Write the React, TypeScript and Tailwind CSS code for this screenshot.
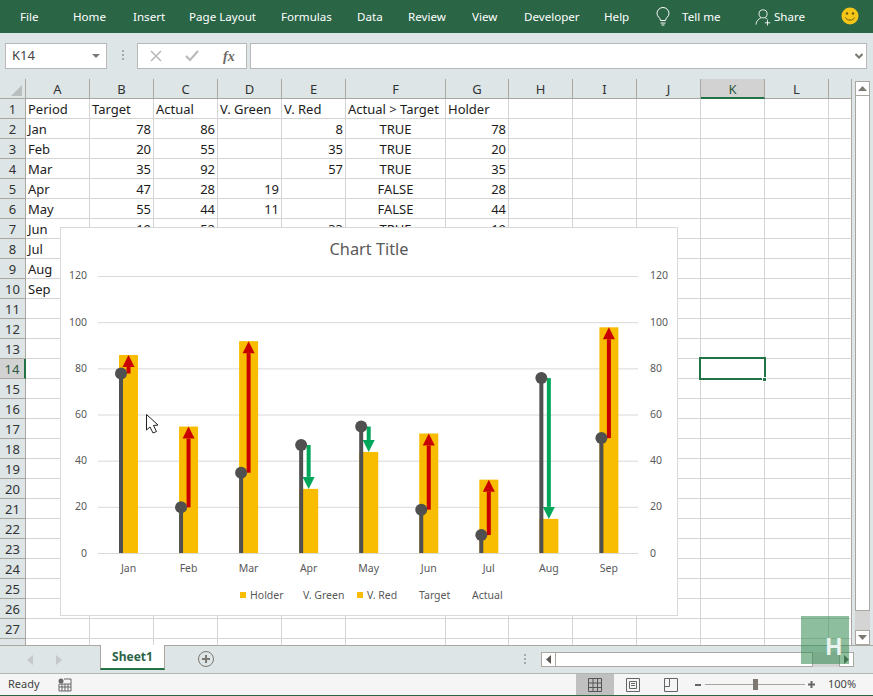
import React from "react";

const CELL_FONT = "font-['Noto_Sans','Open_Sans',sans-serif]";

const tabs = [
  { t: "File", c: "ml-[20px] w-[53px]" },
  { t: "Home", c: "w-[60px]" },
  { t: "Insert", c: "w-[56px]" },
  { t: "Page Layout", c: "w-[92px]" },
  { t: "Formulas", c: "w-[76px]" },
  { t: "Data", c: "w-[51px]" },
  { t: "Review", c: "w-[64px]" },
  { t: "View", c: "w-[52px]" },
  { t: "Developer", c: "w-[80px]" },
  { t: "Help", c: "w-[49px]" },
];

const cols = ["A", "B", "C", "D", "E", "F", "G", "H", "I", "J", "K", "L", ""];

type Row = (string | number | null)[];
const data: Row[] = [
  ["Period", "Target", "Actual", "V. Green", "V. Red", "Actual > Target", "Holder"],
  ["Jan", 78, 86, null, 8, "TRUE", 78],
  ["Feb", 20, 55, null, 35, "TRUE", 20],
  ["Mar", 35, 92, null, 57, "TRUE", 35],
  ["Apr", 47, 28, 19, null, "FALSE", 28],
  ["May", 55, 44, 11, null, "FALSE", 44],
  ["Jun", 19, 52, null, 33, "TRUE", 19],
  ["Jul", 8, 32, null, 24, "TRUE", 8],
  ["Aug", 76, 15, 61, null, "FALSE", 15],
  ["Sep", 50, 98, null, 48, "TRUE", 50],
];

const series = [
  { m: "Jan", t: 78, a: 86 },
  { m: "Feb", t: 20, a: 55 },
  { m: "Mar", t: 35, a: 92 },
  { m: "Apr", t: 47, a: 28 },
  { m: "May", t: 55, a: 44 },
  { m: "Jun", t: 19, a: 52 },
  { m: "Jul", t: 8, a: 32 },
  { m: "Aug", t: 76, a: 15 },
  { m: "Sep", t: 50, a: 98 },
];

const Y = (v: number) => 553.5 - v * 2.308;

function Chart() {
  const ticks = [0, 20, 40, 60, 80, 100, 120];
  const lbl = "font-['Noto_Sans',sans-serif] text-[10.5px] fill-[#595959]";
  return (
    <div className="absolute left-[60px] top-[148px] h-[389px] w-[618px] border border-[#d9d9d9] bg-white">
      <svg viewBox="61 228 616 387" width={616} height={387} className="block">
        <text x={369} y={255} textAnchor="middle" className="font-['Noto_Sans',sans-serif] text-[16.3px] fill-[#595959]">
          Chart Title
        </text>
        {ticks.map((v) => {
          const off = v === 120 ? 2.5 : 3;
          return (
            <g key={v}>
              <line x1={98} x2={638} y1={Y(v)} y2={Y(v)} stroke="#d9d9d9" strokeWidth={1} />
              <text x={87} y={Y(v) + off} textAnchor="end" className={lbl}>{v}</text>
              <text x={650} y={Y(v) + off} className={lbl}>{v}</text>
            </g>
          );
        })}
        {series.map((s, i) => {
          const left = 119 + i * 60.05;
          const cx = left + 9.5;
          const up = s.a > s.t;
          const color = up ? "#c80000" : "#00a65a";
          const ya = Y(s.a);
          const yt = Y(s.t);
          const base = up ? ya + 12 : ya - 12;
          return (
            <g key={s.m}>
              <rect x={left} y={ya} width={19} height={553 - ya} fill="#f8bc00" />
              <rect x={cx - 2} y={Math.min(yt, base)} width={4} height={Math.abs(base - yt)} fill={color} />
              <polygon points={`${cx - 6},${base} ${cx + 6},${base} ${cx},${ya}`} fill={color} />
              <rect x={left} y={yt} width={4} height={553 - yt} fill="#505050" />
              <circle cx={left + 2} cy={yt} r={6} fill="#505050" />
              <text x={cx} y={572} textAnchor="middle" className={lbl}>{s.m}</text>
            </g>
          );
        })}
        <rect x={240} y={592} width={6} height={6} fill="#f8bc00" />
        <text x={250} y={599} className={lbl}>Holder</text>
        <text x={303} y={599} className={lbl}>V. Green</text>
        <rect x={357} y={592} width={6} height={6} fill="#f8bc00" />
        <text x={367} y={599} className={lbl}>V. Red</text>
        <text x={419} y={599} className={lbl}>Target</text>
        <text x={472} y={599} className={lbl}>Actual</text>
        <path d="M146.5 414.5 L146.5 430 L150 427 L153 433 L156.5 431.5 L153.5 425.5 L158 425 Z" fill="#fff" stroke="#222" strokeWidth={1} />
      </svg>
    </div>
  );
}

function Sheet() {
  const rows = Array.from({ length: 28 }, (_, i) => i);
  return (
    <div className={`relative h-[566px] w-[852px] overflow-hidden ${CELL_FONT} text-[13px] leading-[20px] text-[#1c1c1c]`}>
      <div className="grid grid-cols-[26px_64px_64px_64px_64px_64px_100px_63px_64px_64px_64px_64px_64px_23px] auto-rows-[20px]">
        <div className="relative border-b border-r border-[#a8a8a0]">
          <svg width={25} height={19} className="absolute left-0 top-0">
            <polygon points="11,17 22,17 22,6" fill="#b9bfbf" />
          </svg>
        </div>
        {cols.map((c, i) => (
          <div
            key={i}
            className={
              c === "K"
                ? "border-b-2 border-r border-b-[#217346] border-r-[#a8a8a0] bg-[#d2d2d2] text-center text-[#2d5a40]"
                : i === 12
                  ? "border-b border-r border-[#a8a8a0]"
                  : "border-b border-r border-[#a8a8a0] text-center text-[#333]"
            }
          >
            {c}
          </div>
        ))}
        {rows.map((r) => {
          const row = data[r] || [];
          return (
            <React.Fragment key={r}>
              <div
                className={
                  r === 13
                    ? "border-b border-r-2 border-b-[#a8a8a0] border-r-[#217346] bg-[#d2d2d2] text-center text-[#2d5a40]"
                    : "border-b border-r border-[#a8a8a0] text-center text-[#333]"
                }
              >
                {r < 27 ? r + 1 : null}
              </div>
              {cols.map((_, c) => {
                const v = row[c];
                const align = r > 0 && c === 5 ? "text-center" : typeof v === "number" ? "pr-[2px] text-right" : "pl-[2px]";
                const edge = c === 12 ? "border-r-[#a8a8a0]" : "";
                return (
                  <div key={c} className={`overflow-hidden whitespace-nowrap border-b border-r border-[#d4d4d4] bg-white ${edge} ${align}`}>
                    {v}
                  </div>
                );
              })}
            </React.Fragment>
          );
        })}
      </div>
      <Chart />
      <div className="absolute left-[699px] top-[278px] h-[23px] w-[67px] border-2 border-[#217346]" />
      <div className="absolute left-[762px] top-[298px] h-[5px] w-[5px] border border-white bg-[#217346]" />
    </div>
  );
}

function ScrollV() {
  return (
    <div className="ml-[3px] mt-[2px] flex h-[564px] w-[15px] flex-col">
      <div className="flex h-[15px] items-center justify-center border border-[#a8a8a0] bg-white">
        <svg width={9} height={5}><polygon points="0,5 9,5 4.5,0" fill="#7d7872" /></svg>
      </div>
      <div className="h-[515px] border-x border-b border-[#a8a8a0] bg-white" />
      <div className="flex-1 bg-[#d4d4d4]" />
      <div className="flex h-[15px] items-center justify-center border border-[#a8a8a0] bg-white">
        <svg width={9} height={5}><polygon points="0,0 9,0 4.5,5" fill="#7d7872" /></svg>
      </div>
    </div>
  );
}

export default function App() {
  return (
    <div className={`relative h-[696px] w-[873px] overflow-hidden bg-[#dde5e6] ${CELL_FONT}`}>
      {/* Ribbon */}
      <div className="flex h-[33px] items-center bg-[#2a6546] text-[11.6px] text-white">
        {tabs.map((x) => (
          <div key={x.t} className={x.c}>{x.t}</div>
        ))}
        <svg width={16} height={20} viewBox="0 0 16 20" fill="none" stroke="#fff" strokeWidth={1} className="ml-[2px]">
          <path d="M5.5 13.5 C5.5 11 2 9.5 2 6.5 A6 6 0 0 1 14 6.5 C14 9.5 10.5 11 10.5 13.5 Z" />
          <path d="M5.5 16 H10.5 M6.5 18 H9.5" />
        </svg>
        <div className="ml-[11px] w-[50px]">Tell me</div>
        <svg width={17} height={18} viewBox="0 0 19 19" fill="none" stroke="#fff" strokeWidth={1} className="ml-[23px]">
          <circle cx={9} cy={6} r={4.5} />
          <path d="M1 18 C1.5 14 4 11.5 6.5 10.5 M11.5 10.5 C12.5 11 13.5 11.5 14 12" />
          <path d="M14 13 V19 M11 16 H17" />
        </svg>
        <div className="ml-[2px] w-[50px]">Share</div>
        <svg width={18} height={18} viewBox="0 0 18 18" className="ml-[17px] mt-[-1px]">
          <circle cx={9} cy={9} r={8.5} fill="#f5c518" />
          <circle cx={6} cy={6.5} r={1.2} fill="#6b5a10" />
          <circle cx={12} cy={6.5} r={1.2} fill="#6b5a10" />
          <path d="M4.5 10.5 C6 14 12 14 13.5 10.5" stroke="#6b5a10" strokeWidth={1} fill="none" />
        </svg>
      </div>

      {/* Formula bar */}
      <div className="flex h-[46px] items-start pl-[5px] pt-[10px]">
        <div className="flex h-[26px] w-[102px] items-center justify-between border border-[#b9b9b9] bg-white pl-[6px] pr-[6px] text-[13px] text-[#444]">
          K14
          <svg width={8} height={4}><polygon points="0,0 8,0 4,4" fill="#7d7872" /></svg>
        </div>
        <div className="ml-[15px] mt-[7px] flex w-[3px] flex-col gap-[2px]">
          <div className="h-[2px] w-[2px] bg-[#a8a8a8]" />
          <div className="h-[2px] w-[2px] bg-[#a8a8a8]" />
          <div className="h-[2px] w-[2px] bg-[#a8a8a8]" />
        </div>
        <div className="ml-[12px] flex h-[26px] w-[110px] items-center border border-[#b9b9b9] bg-white">
          <svg width={12} height={12} viewBox="0 0 12 12" className="ml-[12px]" stroke="#b8b8b8" strokeWidth={1.5}>
            <path d="M1 1 L11 11 M11 1 L1 11" />
          </svg>
          <svg width={14} height={12} viewBox="0 0 14 12" className="ml-[23px]" fill="none" stroke="#b8b8b8" strokeWidth={2}>
            <path d="M1 6 L5 10 L13 1" />
          </svg>
          <div className="ml-[24px] font-['Liberation_Serif',serif] text-[14px] font-bold italic text-[#6e6a66]">fx</div>
        </div>
        <div className="ml-[3px] flex h-[26px] w-[617px] items-center justify-end border border-[#b9b9b9] bg-white pr-[3px]">
          <svg width={8} height={6} viewBox="0 0 8 6" fill="none" stroke="#7d7872" strokeWidth={2}>
            <path d="M0.5 1 L4 4.5 L7.5 1" />
          </svg>
        </div>
      </div>

      {/* Body */}
      <div className="flex">
        <Sheet />
        <ScrollV />
      </div>

      {/* Sheet tabs */}
      <div className="flex h-[28px] items-start border-t border-[#a8a8a0]">
        <svg width={100} height={26} className="shrink-0">
          <polygon points="33,9 33,19 27,14" fill="#c4c8c8" />
          <polygon points="56,9 56,19 62,14" fill="#c4c8c8" />
        </svg>
        <div className="mt-[-1px] flex h-[25px] w-[65px] items-center justify-center border-x border-b-2 border-x-[#a8a8a0] border-b-[#217346] bg-white text-[12px] font-bold text-[#2a6546]">
          Sheet1
        </div>
        <div className="ml-[33px] mt-[5px] flex h-[16px] w-[16px] items-center justify-center rounded-full border border-[#7d7872]">
          <svg width={10} height={10} stroke="#7d7872" strokeWidth={2}><path d="M5 1 V9 M1 5 H9" /></svg>
        </div>
        <div className="ml-[310px] mt-[8px] flex w-[2px] flex-col gap-[2px]">
          <div className="h-[2px] w-[2px] bg-[#a8a8a8]" />
          <div className="h-[2px] w-[2px] bg-[#a8a8a8]" />
          <div className="h-[2px] w-[2px] bg-[#a8a8a8]" />
        </div>
        <div className="ml-[15px] mt-[6px] flex h-[15px] w-[313px] items-stretch">
          <div className="flex w-[15px] items-center justify-center border border-[#a8a8a0] bg-white">
            <svg width={5} height={9}><polygon points="5,0 5,9 0,4.5" fill="#5f5a55" /></svg>
          </div>
          <div className="w-[257px] border-y border-r border-[#a8a8a0] bg-white" />
          <div className="flex-1 bg-[#d4d4d4]" />
          <div className="flex w-[15px] items-center justify-center border border-[#a8a8a0] bg-white">
            <svg width={5} height={9}><polygon points="0,0 0,9 5,4.5" fill="#5f5a55" /></svg>
          </div>
        </div>
      </div>

      {/* Status bar */}
      <div className="flex h-[23px] items-center border-t border-b border-t-[#b5b5b5] border-b-[#2a6546] bg-[#f5f5f5] text-[11px] text-[#444]">
        <div className="ml-[8px] w-[50px]">Ready</div>
        <svg width={14} height={14} viewBox="0 0 14 14">
          <circle cx={3} cy={3} r={2.5} fill="#666" />
          <path d="M6 1 H13 V13 H1 V6 H13 M1 9 H13 M4 6 V13 M7 6 V13 M10 6 V13" stroke="#666" fill="none" />
        </svg>
        <div className="ml-[504px] flex h-full w-[38px] items-center justify-center bg-[#c0c0c0]">
          <svg width={14} height={14} viewBox="0 0 14 14" fill="none" stroke="#555"><path d="M0.5 0.5 H13.5 V13.5 H0.5 Z M0.5 5 H13.5 M0.5 9.5 H13.5 M5 0.5 V13.5 M9.5 0.5 V13.5" /></svg>
        </div>
        <svg width={14} height={14} viewBox="0 0 14 14" fill="none" stroke="#666" className="ml-[12px]">
          <path d="M0.5 0.5 H13.5 V13.5 H0.5 Z M3.5 3.5 H10.5 V10.5 H3.5 Z M5 5.5 H9 M5 7.5 H9" />
        </svg>
        <svg width={14} height={14} viewBox="0 0 14 14" fill="none" stroke="#666" className="ml-[24px]">
          <path d="M0.5 0.5 H13.5 V13.5 H0.5 Z M0.5 8.5 H5.5 V0.5" />
        </svg>
        <div className="ml-[17px] h-[2px] w-[6px] bg-[#666]" />
        <div className="relative ml-[4px] h-[1px] w-[100px] bg-[#a8a8a0]">
          <div className="absolute left-[48px] top-[-5px] h-[11px] w-[5px] bg-[#7d7872]" />
        </div>
        <svg width={7} height={7} className="ml-[3px]" stroke="#666" strokeWidth={2}><path d="M3.5 0 V7 M0 3.5 H7" /></svg>
        <div className="ml-[13px]">100%</div>
      </div>

      {/* Watermark */}
      <div className="absolute left-[801px] top-[616px] flex h-[48px] w-[48px] items-end justify-end bg-[#2f8a4e]/55 pb-[5px] pr-[7px] font-['Liberation_Sans',sans-serif] text-[23px] font-bold leading-none text-white/85">
        H
      </div>
    </div>
  );
}
